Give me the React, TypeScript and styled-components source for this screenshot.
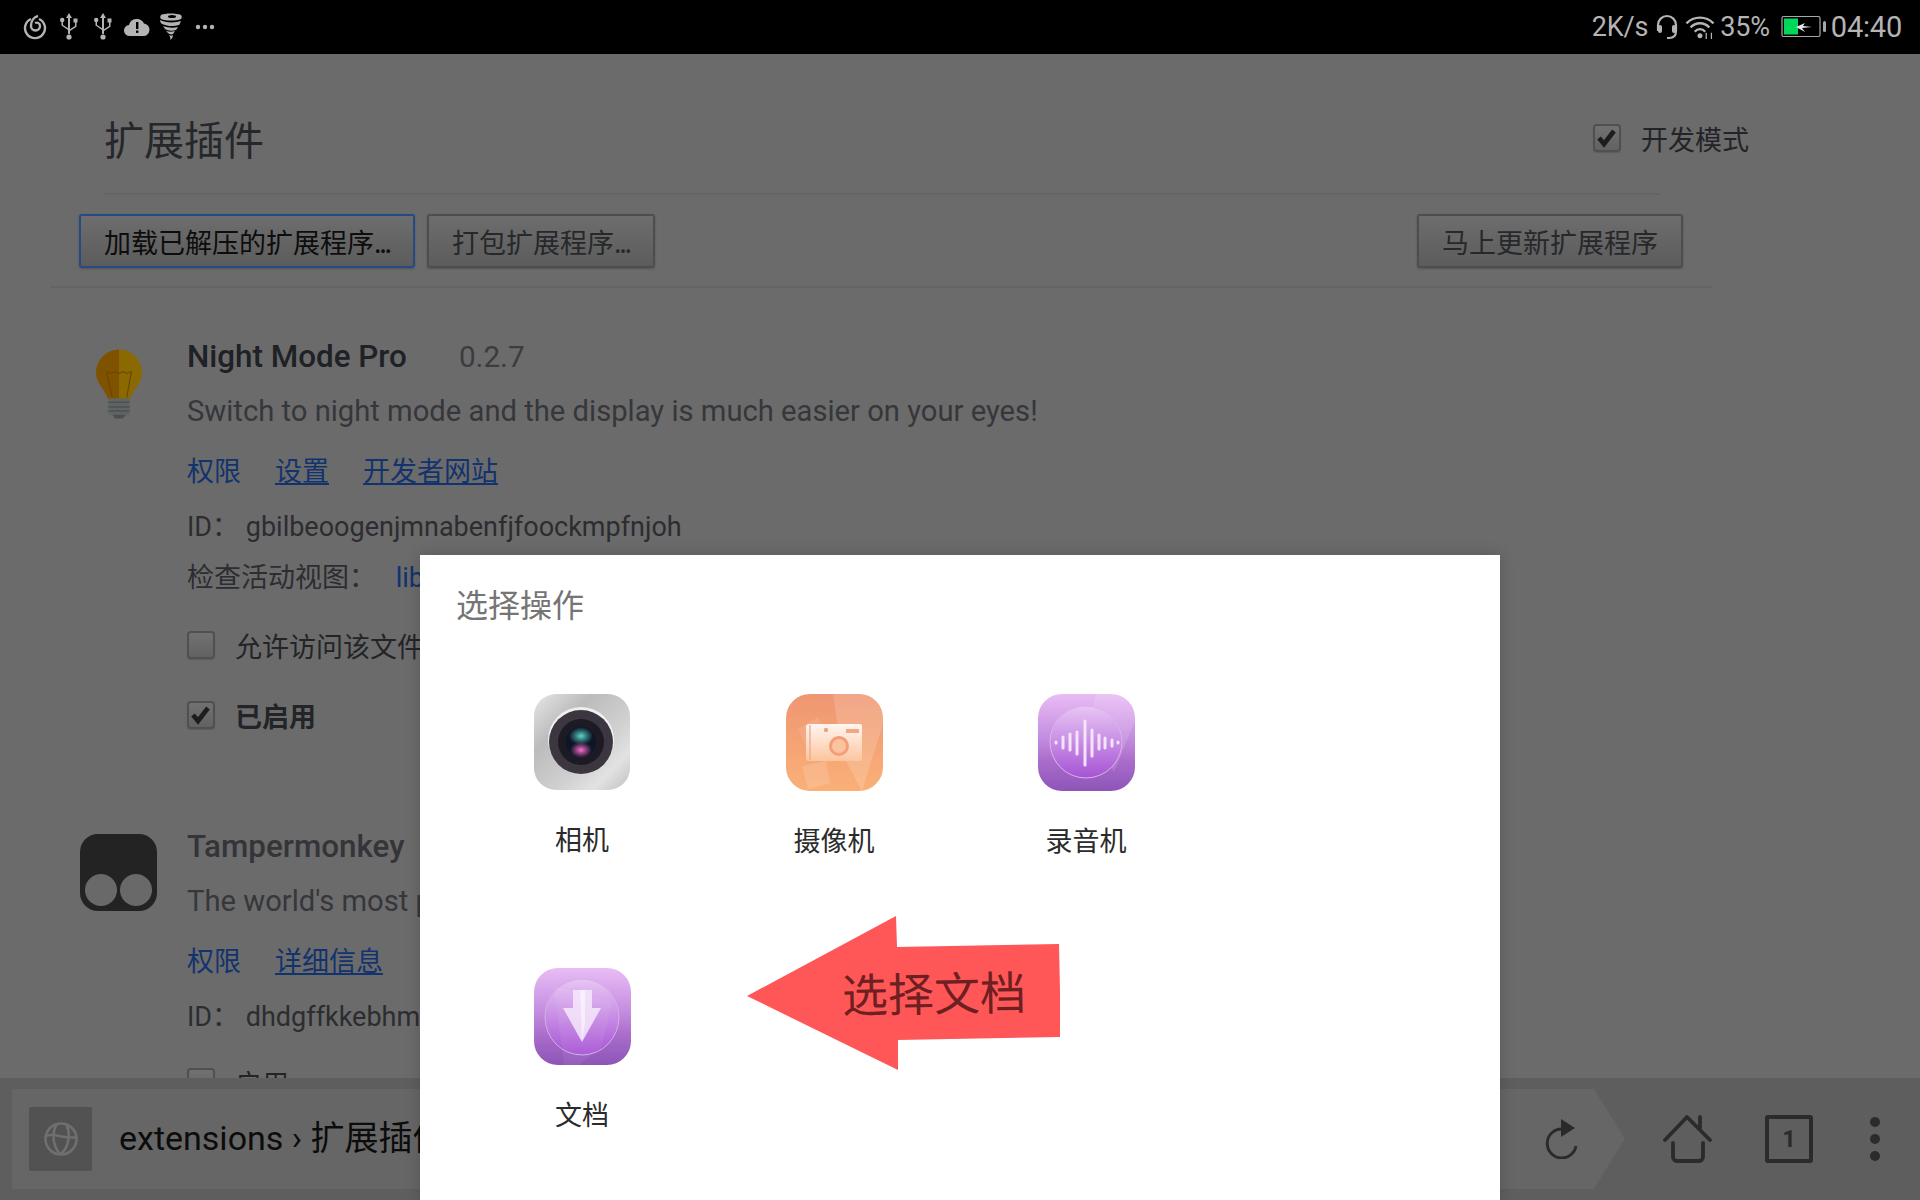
import React from 'react';
import styled, { createGlobalStyle } from 'styled-components';

const Global = createGlobalStyle`
  html, body { margin: 0; padding: 0; background: #6b6b6b; }
  body { font-family: Roboto, "Noto Sans CJK SC", sans-serif; }
`;

const Screen = styled.div`
  position: relative;
  width: 1920px;
  height: 1200px;
  overflow: hidden;
  display: flex;
  flex-direction: column;
  background: #6b6b6b;
`;

/* status bar */
const StatusBar = styled.div`
  height: 54px;
  flex: none;
  background: #000;
  color: #b4b4b4;
  display: flex;
  align-items: center;
  justify-content: space-between;
  padding: 0 18px;
`;
const StatusGroup = styled.div<{ $gap: number }>`
  display: flex;
  align-items: center;
  gap: ${(p) => p.$gap}px;
`;
const StatusSlot = styled.span`
  width: 34px;
  display: flex;
  justify-content: center;
`;
const StatusText = styled.span<{ $size?: number; $ml?: number }>`
  font-size: ${(p) => p.$size ?? 27}px;
  margin-left: ${(p) => p.$ml ?? 0}px;
  line-height: 54px;
  letter-spacing: -0.2px;
`;
const WifiWrap = styled.span`
  display: flex;
  margin: 0 -4px 0 -1px;
`;
const BatteryWrap = styled.span`
  display: flex;
  margin-left: 4px;
`;

/* extensions page */
const Page = styled.div`
  flex: 1;
  min-height: 0;
  overflow: hidden;
  padding: 0 0 0 50px;
`;
const Header = styled.div`
  height: 141px;
  width: 1556px;
  margin-left: 54px;
  padding-top: 29px;
  display: flex;
  align-items: center;
  justify-content: space-between;
  border-bottom: 2px solid #656565;
  box-sizing: border-box;
`;
const Title = styled.h1`
  margin: 0;
  font-size: 40px;
  font-weight: 400;
  color: #25272b;
  font-family: "Noto Sans CJK SC", sans-serif;
`;
const DevMode = styled.label`
  display: flex;
  align-items: center;
  gap: 20px;
  font-size: 27px;
  color: #222428;
  margin-right: -89px;
  font-family: "Noto Sans CJK SC", sans-serif;
`;
const Box = styled.span`
  width: 28px;
  height: 28px;
  flex: none;
  border: 2px solid #505050;
  border-radius: 4px;
  background: linear-gradient(#717171, #626262);
  box-sizing: border-box;
  display: flex;
  align-items: center;
  justify-content: center;
  box-shadow: 0 1px 1px #5c5c5c;
`;
const Toolbar = styled.div`
  width: 1662px;
  height: 93px;
  box-sizing: border-box;
  border-bottom: 2px solid #656565;
  display: flex;
  justify-content: space-between;
  padding: 19px 29px 0 29px;
`;
const ButtonRow = styled.div`
  display: flex;
  gap: 12px;
`;
const Button = styled.button<{ $focus?: boolean }>`
  height: 54px;
  padding: 0 23px;
  box-sizing: border-box;
  border: 2px solid ${(p) => (p.$focus ? '#264a85' : '#4d4d4d')};
  border-radius: 3px;
  background: linear-gradient(#6d6d6d, #5c5c5c);
  color: ${(p) => (p.$focus ? '#0d0d0d' : '#26282b')};
  font-size: 27px;
  font-family: "Noto Sans CJK SC", sans-serif;
  white-space: nowrap;
  box-shadow: 0 1px 2px #555;
`;
const Dotted = styled.span`
  letter-spacing: -2.2px;
`;

const Ext = styled.div<{ $top: number }>`
  display: flex;
  padding-top: ${(p) => p.$top}px;
`;
const ExtIcon = styled.div<{ $mt: number }>`
  width: 137px;
  flex: none;
  display: flex;
  justify-content: center;
  align-items: flex-start;
  padding-top: ${(p) => p.$mt}px;
`;
const ExtBody = styled.div`
  display: flex;
  flex-direction: column;
`;
const NameRow = styled.div`
  display: flex;
  align-items: baseline;
  height: 42px;
`;
const Name = styled.span<{ $off?: boolean }>`
  font-size: 31.4px;
  font-weight: 500;
  color: ${(p) => (p.$off ? '#333538' : '#1e2126')};
`;
const Version = styled.span`
  font-size: 29.7px;
  color: #3a3c40;
  margin-left: 52px;
`;
const Desc = styled.div`
  font-size: 29.2px;
  color: #35373b;
  height: 40px;
  line-height: 40px;
  margin-top: 11px;
  white-space: nowrap;
`;
const Links = styled.div`
  display: flex;
  gap: 34px;
  margin-top: 19px;
  height: 40px;
  line-height: 40px;
  font-size: 27px;
  font-family: "Noto Sans CJK SC", sans-serif;
`;
const Anchor = styled.a<{ $under?: boolean }>`
  color: #12336e;
  text-decoration: ${(p) => (p.$under ? 'underline' : 'none')};
`;
const ViewLink = styled(Anchor)`
  margin-left: 13px;
`;
const Meta = styled.div<{ $mt: number }>`
  font-size: 27px;
  color: #2b2d31;
  height: 40px;
  line-height: 40px;
  margin-top: ${(p) => p.$mt}px;
  white-space: nowrap;
`;
const Check = styled.div<{ $mt: number; $bold?: boolean }>`
  display: flex;
  align-items: center;
  gap: 20px;
  height: 40px;
  margin-top: ${(p) => p.$mt}px;
  font-size: 27px;
  font-weight: ${(p) => (p.$bold ? 700 : 400)};
  color: #222428;
  font-family: "Noto Sans CJK SC", sans-serif;
  white-space: nowrap;
`;

/* bottom browser bar */
const BottomBar = styled.div`
  position: relative;
  height: 122px;
  flex: none;
  background: #5e5e5e;
  display: flex;
  align-items: center;
  padding-left: 12px;
`;
const UrlField = styled.div`
  width: 1613px;
  height: 100px;
  background: #666;
  clip-path: polygon(0 0, 1582px 0, 100% 50%, 1582px 100%, 0 100%);
  display: flex;
  align-items: center;
  padding-left: 17px;
  box-sizing: border-box;
  flex: none;
`;
const GlobeBox = styled.div`
  width: 63px;
  height: 64px;
  background: #525252;
  border-radius: 2px;
  display: flex;
  align-items: center;
  justify-content: center;
  flex: none;
`;
const UrlText = styled.span`
  font-size: 34px;
  color: #0c0c0c;
  margin: 0 0 8px 27px;
  white-space: nowrap;
`;
const Reload = styled.div`
  margin-left: auto;
  margin-right: 46px;
  display: flex;
`;
const BarIcons = styled.div`
  display: flex;
  align-items: center;
  margin-left: 38px;
  gap: 52px;
`;
const TabIcon = styled.div`
  width: 48px;
  height: 48px;
  box-sizing: border-box;
  border: 4px solid #2b2b2b;
  border-radius: 3px;
  display: flex;
  align-items: center;
  justify-content: center;
  font-size: 23px;
  font-weight: 700;
  color: #2b2b2b;
`;
const Dots = styled.div`
  display: flex;
  flex-direction: column;
  gap: 7px;
  margin-left: 5px;
`;
const Dot = styled.span`
  width: 10px;
  height: 10px;
  border-radius: 50%;
  background: #2b2b2b;
`;

/* chooser dialog */
const Dialog = styled.div`
  position: absolute;
  left: 420px;
  top: 555px;
  width: 1080px;
  height: 645px;
  background: #fff;
  box-shadow: 0 0 14px rgba(0, 0, 0, 0.18);
`;
const DialogTitle = styled.div`
  height: 80px;
  line-height: 96px;
  padding-left: 36px;
  font-size: 32px;
  color: #757575;
  font-family: "Noto Sans CJK SC", sans-serif;
`;
const Grid = styled.div`
  display: grid;
  grid-template-columns: repeat(3, 252px);
  grid-auto-rows: 274px;
  padding: 0 0 0 36px;
  margin-top: 43px;
`;
const AppCell = styled.div`
  display: flex;
  flex-direction: column;
  align-items: center;
  padding-top: 16px;
`;
const AppLabel = styled.div`
  margin-top: 29px;
  font-size: 27px;
  line-height: 40px;
  color: #2b2b2b;
  font-family: "Noto Sans CJK SC", sans-serif;
`;
const Arrow = styled.div`
  position: absolute;
  left: 746px;
  top: 915px;
  width: 314px;
  height: 156px;
`;
const ArrowText = styled.div`
  position: absolute;
  left: 96px;
  top: 46px;
  font-size: 46px;
  line-height: 60px;
  color: #6e1f22;
  white-space: nowrap;
  transform: rotate(-1deg);
  font-family: "Noto Sans CJK SC", sans-serif;
`;

const CheckMark = () => (
  <svg width="22" height="20" viewBox="0 0 22 20">
    <path d="M3 10l5 6L18 3" fill="none" stroke="#1d1d1d" strokeWidth="4.600" />
  </svg>
);

const Usb = () => (
  <svg width="20" height="30" viewBox="0 0 20 30" fill="#b4b4b4">
    <path d="M10 1l3 5h-2v15.500l-1 1-1-1V6H7z" />
    <circle cx="10" cy="25" r="2.600" />
    <path d="M2.500 9v4.500L9 18v-1.800L4 13V9z" />
    <circle cx="3.200" cy="8" r="2.200" />
    <path d="M16 10v4l-5 3.200V19l6.500-4.200V10z" />
    <rect x="14.500" y="6.500" width="4" height="4" />
  </svg>
);

const StatusLeft = () => (
  <StatusGroup $gap={0}>
    <StatusSlot>
      <svg width="24" height="26" viewBox="0 0 24 26" fill="none" stroke="#b4b4b4" strokeWidth="2.400">
        <path d="M8 5a10 10 0 1 0 8 0" />
        <path d="M15 2c-4 1-7 5-7 10a4.500 4.500 0 1 0 9 0c0-3-3-4-5-3" />
      </svg>
    </StatusSlot>
    <StatusSlot><Usb /></StatusSlot>
    <StatusSlot><Usb /></StatusSlot>
    <StatusSlot>
      <svg width="26" height="20" viewBox="0 0 26 20">
        <path fill="#b4b4b4" d="M6 19a5.500 5.500 0 0 1-1-11A8 8 0 0 1 20 6.500a6.300 6.300 0 0 1 0 12.500z" />
        <rect x="12" y="5" width="2.400" height="7" fill="#000" />
        <rect x="12" y="13.500" width="2.400" height="2.400" fill="#000" />
      </svg>
    </StatusSlot>
    <StatusSlot>
      <svg width="24" height="28" viewBox="0 0 24 28" fill="#b4b4b4">
        <path d="M2 2c4-2 15-2 20 0 1 1 1 3 0 4-5 2-15 2-20 0-1-1-1-3 0-4z" />
        <ellipse cx="13" cy="3.600" rx="4" ry="1.500" fill="#000" />
        <path d="M1 7c5 3 15 3 21 1-1 2-1 3-2 4-6 2-12 1-17-1-1-1-2-2-2-4z" />
        <path d="M4 13c5 2 11 2 15 1l-2 3c-4 1-8 1-11-1z" />
        <path d="M7 18c3 1 6 1 9 0l-2 3c-2 1-4 0-5-1z" />
        <path d="M10 22c2 1 3 1 4 0 0 2-1 4-3 5 1-2 0-3-1-5z" />
      </svg>
    </StatusSlot>
    <StatusSlot>
      <svg width="20" height="6" viewBox="0 0 20 6" fill="#b4b4b4">
        <circle cx="3" cy="3" r="2.200" />
        <circle cx="10" cy="3" r="2.200" />
        <circle cx="17" cy="3" r="2.200" />
      </svg>
    </StatusSlot>
  </StatusGroup>
);

const StatusRight = () => (
  <StatusGroup $gap={7}>
    <StatusText>2K/s</StatusText>
    <svg width="24" height="26" viewBox="0 0 24 26" fill="none" stroke="#b4b4b4" strokeWidth="2.200">
      <path d="M3 17V11a9 9 0 0 1 18 0v6c0 5-3 7-7 7h-2" />
      <rect x="3" y="11" width="4" height="8" rx="2" fill="#b4b4b4" stroke="none" />
      <rect x="17" y="11" width="4" height="8" rx="2" fill="#b4b4b4" stroke="none" />
    </svg>
    <WifiWrap>
      <svg width="32" height="25" viewBox="0 0 30 24" fill="none" stroke="#b4b4b4" strokeWidth="2.200">
        <path d="M1 8a18 18 0 0 1 26 0M5 12a12 12 0 0 1 18 0M9 16a6.500 6.500 0 0 1 10 0" />
        <circle cx="14" cy="20" r="2.400" fill="#b4b4b4" stroke="none" />
        <path d="M20 23v-6M25 17v6" strokeWidth="1.200" />
      </svg>
    </WifiWrap>
    <StatusText>35%</StatusText>
    <BatteryWrap>
      <svg width="46" height="24" viewBox="0 0 46 24">
        <rect x="1" y="1.500" width="38" height="20" rx="1.500" fill="none" stroke="#a8a8a8" strokeWidth="1.200" />
        <rect x="3" y="3.500" width="14" height="16" fill="#00d85a" />
        <path d="M15 12l9-4-2 3 9 1-10 1 3 4z" fill="#e8e8e8" />
        <rect x="42" y="6" width="3" height="11" rx="1.500" fill="#a8a8a8" />
      </svg>
    </BatteryWrap>
    <StatusText $size={29} $ml={-3}>04:40</StatusText>
  </StatusGroup>
);

const Bulb = () => (
  <svg width="48" height="72" viewBox="0 0 50 74">
    <path d="M25 0a24 24 0 0 0-24 24c0 11 8 16 13 28h11z" fill="#7f5200" />
    <path d="M25 0a24 24 0 0 1 24 24c0 11-8 16-13 28H25z" fill="#8a6900" />
    <path d="M12 23l5 2 4-2 4 2 4-2 4 2 5-2-5 27M12 23l6 27" fill="none" stroke="#6d4500" strokeWidth="1.200" />
    <rect x="14" y="51" width="22" height="17" fill="#5f6464" />
    <path d="M14 55h22M14 60h22M14 64h22" stroke="#4c5050" strokeWidth="1.500" />
    <path d="M18 68h14l-3 4h-8z" fill="#4c4f4f" />
  </svg>
);

const Tamper = () => (
  <svg width="79" height="79" viewBox="0 0 79 79">
    <rect x="1" y="1" width="77" height="77" rx="18" fill="#232323" />
    <circle cx="22" cy="57" r="16" fill="#696969" />
    <circle cx="57" cy="57" r="16" fill="#696969" />
  </svg>
);

const CameraIcon = () => (
  <svg width="96" height="96" viewBox="0 0 96 96">
    <defs>
      <linearGradient id="cam" x1="0" y1="0" x2="1" y2="1">
        <stop offset="0" stopColor="#e6e6e6" />
        <stop offset=".3" stopColor="#bcbcbc" />
        <stop offset=".6" stopColor="#cfcfcf" />
        <stop offset=".8" stopColor="#e2e2e2" />
        <stop offset="1" stopColor="#c0c0c0" />
      </linearGradient>
      <radialGradient id="lensTop">
        <stop offset="0" stopColor="#5fd6c8" />
        <stop offset="1" stopColor="#4fc2b8" stopOpacity="0" />
      </radialGradient>
      <radialGradient id="lensLow">
        <stop offset="0" stopColor="#ff70d0" />
        <stop offset="1" stopColor="#ef5cc0" stopOpacity="0" />
      </radialGradient>
    </defs>
    <rect x="0" y="0" width="96" height="96" rx="22" fill="url(#cam)" />
    <circle cx="47" cy="46" r="33" fill="#fff" opacity=".75" />
    <circle cx="47" cy="48" r="32" fill="#3b3640" />
    <circle cx="47" cy="48" r="23" fill="#1c1a22" />
    <circle cx="47" cy="48" r="15" fill="#0c1626" />
    <ellipse cx="47" cy="42" rx="12" ry="9" fill="url(#lensTop)" />
    <ellipse cx="47" cy="56" rx="11" ry="8" fill="url(#lensLow)" />
  </svg>
);

const VideoIcon = () => (
  <svg width="97" height="97" viewBox="0 0 97 97">
    <defs>
      <linearGradient id="vid" x1="0" y1="0" x2="0" y2="1">
        <stop offset="0" stopColor="#ef9672" />
        <stop offset="1" stopColor="#fab077" />
      </linearGradient>
      <linearGradient id="vidb" x1="0" y1="0" x2="0" y2="1">
        <stop offset="0" stopColor="#fff" />
        <stop offset="1" stopColor="#fdc7a2" />
      </linearGradient>
      <clipPath id="vidc"><rect width="97" height="97" rx="24" /></clipPath>
    </defs>
    <g clipPath="url(#vidc)">
      <rect width="97" height="97" fill="url(#vid)" />
      <path d="M47 0h50v30L76 97 56 60z" fill="#fff" opacity=".16" />
      <path d="M16 72l24-5 4 22-22 6z" fill="#fff" opacity=".14" />
      <path d="M12 35l20-12 10 30-18 8z" fill="#fff" opacity=".1" />
    </g>
    <path d="M23 30h51a2 2 0 0 1 2 2v33a2 2 0 0 1-2 2H23a3 3 0 0 1-3-3V33a3 3 0 0 1 3-3z" fill="url(#vidb)" opacity=".9" />
    <path d="M24 31v35" stroke="#f5a07c" strokeWidth="1.200" />
    <rect x="60" y="35" width="13" height="4" fill="#f7a57e" />
    <circle cx="40" cy="36" r="2.200" fill="#f5a07c" />
    <circle cx="53" cy="52" r="8.500" fill="#fbc3a0" stroke="#f49e78" strokeWidth="3" />
  </svg>
);

const PurpleDefs = ({ id }: { id: string }) => (
  <defs>
    <linearGradient id={id} x1="0" y1="0" x2="0" y2="1">
      <stop offset="0" stopColor="#e9bcf5" />
      <stop offset=".45" stopColor="#c48de0" />
      <stop offset=".7" stopColor="#a96cc9" />
      <stop offset="1" stopColor="#8d55b8" />
    </linearGradient>
    <linearGradient id={id + 'o'} x1="0" y1="0" x2="0" y2="1">
      <stop offset="0" stopColor="#e8c6f4" />
      <stop offset="1" stopColor="#a653d4" />
    </linearGradient>
  </defs>
);

const RecorderIcon = () => (
  <svg width="97" height="97" viewBox="0 0 97 97">
    <PurpleDefs id="rec" />
    <rect width="97" height="97" rx="24" fill="url(#rec)" />
    <path d="M58 0h20a19 19 0 0 1 19 19v8L76 78 50 40z" fill="#fff" opacity=".12" />
    <ellipse cx="48" cy="48" rx="36" ry="36" fill="url(#reco)" stroke="#d9b4ea" strokeWidth="1" />
    <path d="M18 48v1M25 43v11M32 40v16M39 38v22M47 27v44M54 36v26M61 41v14M67 44v10M74 46v6M80 48v1" stroke="#f4e4fa" strokeWidth="3" strokeLinecap="round" />
  </svg>
);

const DocIcon = () => (
  <svg width="97" height="97" viewBox="0 0 97 97">
    <PurpleDefs id="doc" />
    <rect width="97" height="97" rx="24" fill="url(#doc)" />
    <ellipse cx="48" cy="49" rx="37" ry="38" fill="url(#doco)" stroke="#d2b0e4" strokeWidth="1" />
    <path d="M20 18l58 16-10 44L45 97H30z" fill="#fff" opacity=".06" />
    <path d="M39 22h19v18h9L48 74 29 40h10z" fill="#f6e9fb" opacity=".85" />
    <path d="M46 22h5v34l-3 16z" fill="#fff" opacity=".5" />
  </svg>
);

const Globe = () => (
  <svg width="36" height="36" viewBox="0 0 36 36" fill="none" stroke="#6f6f6f" strokeWidth="2.600">
    <circle cx="18" cy="18" r="15.500" />
    <path d="M3 15c9-4 19 4 30 1M14 3c-6 9-4 22 3 30M23 3c5 9 3 23-5 30" />
  </svg>
);

const ReloadIcon = () => (
  <svg width="34" height="40" viewBox="0 0 34 40" fill="none">
    <path d="M17 10a14.500 14.500 0 1 0 14 17" stroke="#2a2a2a" strokeWidth="2.800" />
    <path d="M16 0l14 9-14 9z" fill="#2a2a2a" />
  </svg>
);

const HomeIcon = () => (
  <svg width="50" height="48" viewBox="0 0 50 48" fill="none" stroke="#2b2b2b" strokeWidth="3.800" strokeLinecap="round" strokeLinejoin="round">
    <path d="M2 25L24 2l23 23M37 13V2" />
    <path d="M10 28v14a4 4 0 0 0 4 4h22a4 4 0 0 0 4-4V28" />
  </svg>
);

const apps = [
  { label: '相机', icon: <CameraIcon /> },
  { label: '摄像机', icon: <VideoIcon /> },
  { label: '录音机', icon: <RecorderIcon /> },
  { label: '文档', icon: <DocIcon /> },
];

export default function App() {
  return (
    <Screen>
      <Global />
      <StatusBar>
        <StatusLeft />
        <StatusRight />
      </StatusBar>

      <Page>
        <Header>
          <Title>扩展插件</Title>
          <DevMode>
            <Box><CheckMark /></Box>
            开发模式
          </DevMode>
        </Header>
        <Toolbar>
          <ButtonRow>
            <Button $focus>加载已解压的扩展程序<Dotted>...</Dotted></Button>
            <Button>打包扩展程序<Dotted>...</Dotted></Button>
          </ButtonRow>
          <Button>马上更新扩展程序</Button>
        </Toolbar>

        <Ext $top={50}>
          <ExtIcon $mt={11}><Bulb /></ExtIcon>
          <ExtBody>
            <NameRow>
              <Name>Night Mode Pro</Name>
              <Version>0.2.7</Version>
            </NameRow>
            <Desc>Switch to night mode and the display is much easier on your eyes!</Desc>
            <Links>
              <Anchor>权限</Anchor>
              <Anchor $under>设置</Anchor>
              <Anchor $under>开发者网站</Anchor>
            </Links>
            <Meta $mt={17}>ID： gbilbeoogenjmnabenfjfoockmpfnjoh</Meta>
            <Meta $mt={11}>检查活动视图： <ViewLink>lib</ViewLink></Meta>
            <Check $mt={27}><Box />允许访问该文件网址</Check>
            <Check $mt={30} $bold><Box><CheckMark /></Box>已启用</Check>
          </ExtBody>
        </Ext>

        <Ext $top={93}>
          <ExtIcon $mt={5}><Tamper /></ExtIcon>
          <ExtBody>
            <NameRow>
              <Name $off>Tampermonkey</Name>
            </NameRow>
            <Desc>The world's most popular userscript manager</Desc>
            <Links>
              <Anchor>权限</Anchor>
              <Anchor $under>详细信息</Anchor>
            </Links>
            <Meta $mt={17}>ID： dhdgffkkebhmkfjojejmpbldmpobfkfo</Meta>
            <Check $mt={25}><Box />启用</Check>
          </ExtBody>
        </Ext>
      </Page>

      <BottomBar>
        <UrlField>
          <GlobeBox><Globe /></GlobeBox>
          <UrlText>extensions › 扩展插件</UrlText>
          <Reload><ReloadIcon /></Reload>
        </UrlField>
        <BarIcons>
          <HomeIcon />
          <TabIcon>1</TabIcon>
          <Dots><Dot /><Dot /><Dot /></Dots>
        </BarIcons>
      </BottomBar>

      <Dialog>
        <DialogTitle>选择操作</DialogTitle>
        <Grid>
          {apps.map((a) => (
            <AppCell key={a.label}>
              {a.icon}
              <AppLabel>{a.label}</AppLabel>
            </AppCell>
          ))}
        </Grid>
      </Dialog>

      <Arrow>
        <svg width="314" height="156" viewBox="0 0 314 156">
          <path d="M1 81L150 1l1 31 162-3 2 93-163 3 0 30z" fill="#ff5757" />
        </svg>
        <ArrowText>选择文档</ArrowText>
      </Arrow>
    </Screen>
  );
}
